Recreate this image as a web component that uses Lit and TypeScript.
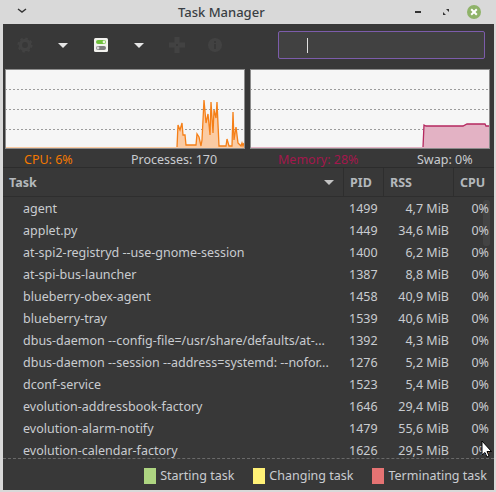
import { LitElement, css, html, svg } from "lit"
import { customElement } from "lit/decorators.js"

const rows = [
  ["agent", "1499", "4,7 MiB", "0%"],
  ["applet.py", "1449", "34,6 MiB", "0%"],
  ["at-spi2-registryd --use-gnome-session", "1400", "6,2 MiB", "0%"],
  ["at-spi-bus-launcher", "1387", "8,8 MiB", "0%"],
  ["blueberry-obex-agent", "1458", "40,9 MiB", "0%"],
  ["blueberry-tray", "1539", "40,6 MiB", "0%"],
  ["dbus-daemon --config-file=/usr/share/defaults/at-...", "1392", "4,3 MiB", "0%"],
  ["dbus-daemon --session --address=systemd: --nofor...", "1276", "5,2 MiB", "0%"],
  ["dconf-service", "1523", "5,4 MiB", "0%"],
  ["evolution-addressbook-factory", "1646", "29,4 MiB", "0%"],
  ["evolution-alarm-notify", "1479", "55,6 MiB", "0%"],
  ["evolution-calendar-factory", "1626", "29,5 MiB", "0%"],
]

// graph samples, in graph-local px (graph is 240x80)
const cpuLine = "172,78 173,56 175,61 177,54 178,66 180,66 181,76 191,76 192,65 194,68 196,77 197,71 199,31 201,54 203,45 205,66 206,33 208,64 209,41 211,49 212,33 214,77 221,77 222,70 224,77 227,77 228,43 229,71 231,58 233,74 236,77 237,74 238,77 239,74"
const memLine = "173,78 174,56 176,57 213,57 217,55 222,55 228,55 235,55 236,57 240,57"

@customElement("app-root")
export class AppRoot extends LitElement {
  graph(line: string, stroke: string, fill: string) {
    return html`<svg class="graph" width="240" height="80" viewBox="0 0 240 80">
      ${[20, 40, 60].map((y) => svg`<line x1="0" x2="240" y1=${y + 0.5} y2=${y + 0.5} stroke="#9c9c9c" stroke-dasharray="2 2" />`)}
      <polygon points="0,78 ${line} 240,80 0,80" fill=${fill} />
      <polyline points=${line} fill="none" stroke=${stroke} stroke-width="1.3" />
    </svg>`
  }

  render() {
    return html`
      <div class="titlebar">
        <svg class="menu" width="12" height="8" viewBox="0 0 12 8"><path d="M2 2 L6 5 L10 2" fill="none" stroke="#333" stroke-width="1.4" /></svg>
        <span class="title">Task Manager</span>
        <div class="wm">
          <svg width="14" height="14" viewBox="0 0 14 14"><rect x="3" y="6" width="6" height="2" fill="#333" /></svg>
          <svg width="14" height="14" viewBox="0 0 14 14"><path d="M7 4 H10 V7 Z M4 7 L7 10 H4 Z" fill="#333" /></svg>
          <svg width="16" height="16" viewBox="0 0 16 16">
            <circle cx="8" cy="8" r="7" fill="#8fb369" />
            <path d="M5.2 5.2 L10.8 10.8 M10.8 5.2 L5.2 10.8" stroke="#fff" stroke-width="2" />
          </svg>
        </div>
      </div>
      <div class="body">
        <div class="toolbar">
          <div class="icons">
            <span class="tool">
              <svg width="16" height="16" viewBox="0 0 16 16"><circle cx="8" cy="8" r="4.6" fill="none" stroke="#424242" stroke-width="3.4" /><circle cx="8" cy="8" r="6.6" fill="none" stroke="#424242" stroke-width="2" stroke-dasharray="2.6 2.6" /></svg>
            </span>
            <span class="tool"><span class="arrow"></span></span>
            <span class="tool">
              <svg width="16" height="16" viewBox="0 0 16 16">
                <rect x="1" y="1" width="14" height="14" rx="1.5" fill="#f2f2ee" />
                <rect x="3" y="3" width="10" height="4" rx="2" fill="#6fc03c" />
                <circle cx="11" cy="5" r="1.4" fill="#e8f4dc" />
                <rect x="3" y="9" width="10" height="4" rx="2" fill="#7d7d7d" />
                <circle cx="5" cy="11" r="1.4" fill="#d8d8d8" />
              </svg>
            </span>
            <span class="tool"><span class="arrow"></span></span>
            <span class="tool">
              <svg width="16" height="16" viewBox="0 0 16 16"><path d="M5.5 0 H10.5 V5.5 H16 V10.5 H10.5 V16 H5.5 V10.5 H0 V5.5 H5.5 Z M7 7 V9 H9 V7 Z" fill="#424242" fill-rule="evenodd" /></svg>
            </span>
            <span class="tool">
              <svg width="16" height="16" viewBox="0 0 16 16"><circle cx="8" cy="8" r="7" fill="#424242" /><rect x="7" y="7" width="2" height="5" fill="#383838" /><rect x="7" y="4" width="2" height="2" fill="#383838" /></svg>
            </span>
          </div>
          <div class="search"><span class="caret"></span></div>
        </div>
        <div class="graphs">
          ${this.graph(cpuLine, "#f57f17", "#fbcba3")}
          ${this.graph(memLine, "#b5285f", "#e3b2c4")}
        </div>
        <div class="stats">
          <span class="cpu">CPU: 6%</span>
          <span>Processes: 170</span>
          <span class="mem">Memory: 28%</span>
          <span>Swap: 0%</span>
        </div>
        <div class="table">
          <div class="head">
            <div class="h-task">Task<span class="arrow small"></span></div>
            <div class="h-cell">PID</div>
            <div class="h-cell">RSS</div>
            <div class="h-cell">CPU</div>
          </div>
          <div class="list">
            ${rows.map(
              (r) => html`<div class="row">
                <span class="name">${r[0]}</span>
                <span class="pid">${r[1]}</span>
                <span class="num">${r[2]}</span>
                <span class="num">${r[3]}</span>
              </div>`
            )}
          </div>
          <div class="thumb"></div>
          <svg class="pointer" width="12" height="19" viewBox="0 0 12 19"><path d="M1 1 V15 L4 12.5 L6 17 L8 16 L6 11.5 H10.5 Z" fill="#fff" stroke="#000" /></svg>
        </div>
        <div class="legend">
          <span class="key"><i class="swatch" style="background:#aed581"></i>Starting task</span>
          <span class="key"><i class="swatch" style="background:#fff176"></i>Changing task</span>
          <span class="key"><i class="swatch" style="background:#e57373"></i>Terminating task</span>
        </div>
      </div>
    `
  }

  static styles = css`
    :host {
      display: flex;
      flex-direction: column;
      width: 496px;
      height: 492px;
      box-sizing: border-box;
      padding: 0 2px 2px 3px;
      background: #d9d9d9;
      font-family: "Noto Sans", sans-serif;
      font-size: 13px;
      color: #c9ccd0;
      overflow: hidden;
    }
    .titlebar {
      flex: none;
      height: 24px;
      display: flex;
      align-items: center;
    }
    .menu {
      margin-left: 13px;
      margin-top: -3px;
    }
    .title {
      margin-left: 150px;
      margin-top: -1px;
      font-weight: 500;
      color: #3a3f44;
      font-size: 13px;
    }
    .wm {
      margin-left: auto;
      margin-right: 12px;
      display: flex;
      align-items: center;
      gap: 13px;
    }
    .body {
      flex: 1;
      min-height: 0;
      background: #383838;
      display: flex;
      flex-direction: column;
    }
    .toolbar {
      flex: none;
      height: 45px;
      box-sizing: border-box;
      display: flex;
      align-items: center;
      padding: 0 9px 3px 0;
    }
    .icons {
      display: flex;
      margin-left: 3px;
    }
    .tool {
      width: 38px;
      height: 16px;
      display: flex;
      align-items: center;
      justify-content: center;
    }
    .arrow {
      width: 0;
      height: 0;
      border-left: 5px solid transparent;
      border-right: 5px solid transparent;
      border-top: 5px solid #e6e6e6;
    }
    .search {
      margin-left: auto;
      width: 177px;
      height: 26px;
      border: 1px solid #7c5cab;
      border-radius: 2px;
      background: #414141;
      display: flex;
      align-items: center;
      padding-left: 28px;
    }
    .caret {
      width: 1px;
      height: 15px;
      background: #e0e0e0;
    }
    .graphs {
      flex: none;
      display: flex;
      gap: 5px;
      padding-left: 2px;
    }
    .graph {
      display: block;
      background: #f6f6f6;
      outline: 1px solid #8c8c8c;
      outline-offset: -1px;
    }
    .stats {
      flex: none;
      height: 18px;
      box-sizing: border-box;
      display: flex;
      align-items: center;
      font-size: 12.5px;
      padding: 2px 0 0 21px;
    }
    .stats span:nth-child(1) { width: 107px; }
    .stats span:nth-child(2) { width: 147px; }
    .stats span:nth-child(3) { width: 139px; }
    .cpu { color: #f57900; }
    .mem { color: #a3174c; }
    .table {
      flex: 1;
      min-height: 0;
      display: flex;
      flex-direction: column;
      position: relative;
      border-bottom: 1px dashed #6a6a6a;
      border-top: 1px solid #2c2c2c;
    }
    .head {
      flex: none;
      height: 28px;
      display: grid;
      grid-template-columns: 340px 40px 70px 1fr;
      font-weight: 700;
      font-size: 12.5px;
      color: #b4b8bc;
      border-bottom: 1px solid #2e2e2e;
    }
    .h-task {
      display: flex;
      align-items: center;
      justify-content: space-between;
      padding: 0 9px 0 6px;
    }
    .arrow.small {
      border-top-color: #c4c4c4;
    }
    .h-cell {
      display: flex;
      align-items: center;
      padding-left: 6px;
      border-left: 1px solid #2e2e2e;
    }
    .list {
      flex: 1;
      min-height: 0;
      overflow: hidden;
    }
    .row {
      height: 22px;
      display: grid;
      grid-template-columns: 340px 40px 66px 40px;
      align-items: center;
      font-size: 12.5px;
    }
    .name {
      padding-left: 20px;
      white-space: nowrap;
    }
    .pid { padding-left: 6px; }
    .num { text-align: right; white-space: nowrap; }
    .thumb {
      position: absolute;
      right: 4px;
      top: 32px;
      width: 7px;
      height: 46px;
      border-radius: 3px;
      background: rgba(255, 255, 255, 0.06);
    }
    .pointer {
      position: absolute;
      left: 478px;
      top: 272px;
    }
    .legend {
      flex: none;
      height: 31px;
      box-sizing: border-box;
      display: flex;
      justify-content: flex-end;
      align-items: center;
      gap: 19px;
      padding: 2px 7px 0 0;
      font-size: 12.5px;
    }
    .key {
      display: flex;
      align-items: center;
      gap: 4px;
    }
    .swatch {
      width: 12px;
      height: 16px;
    }
  `
}
